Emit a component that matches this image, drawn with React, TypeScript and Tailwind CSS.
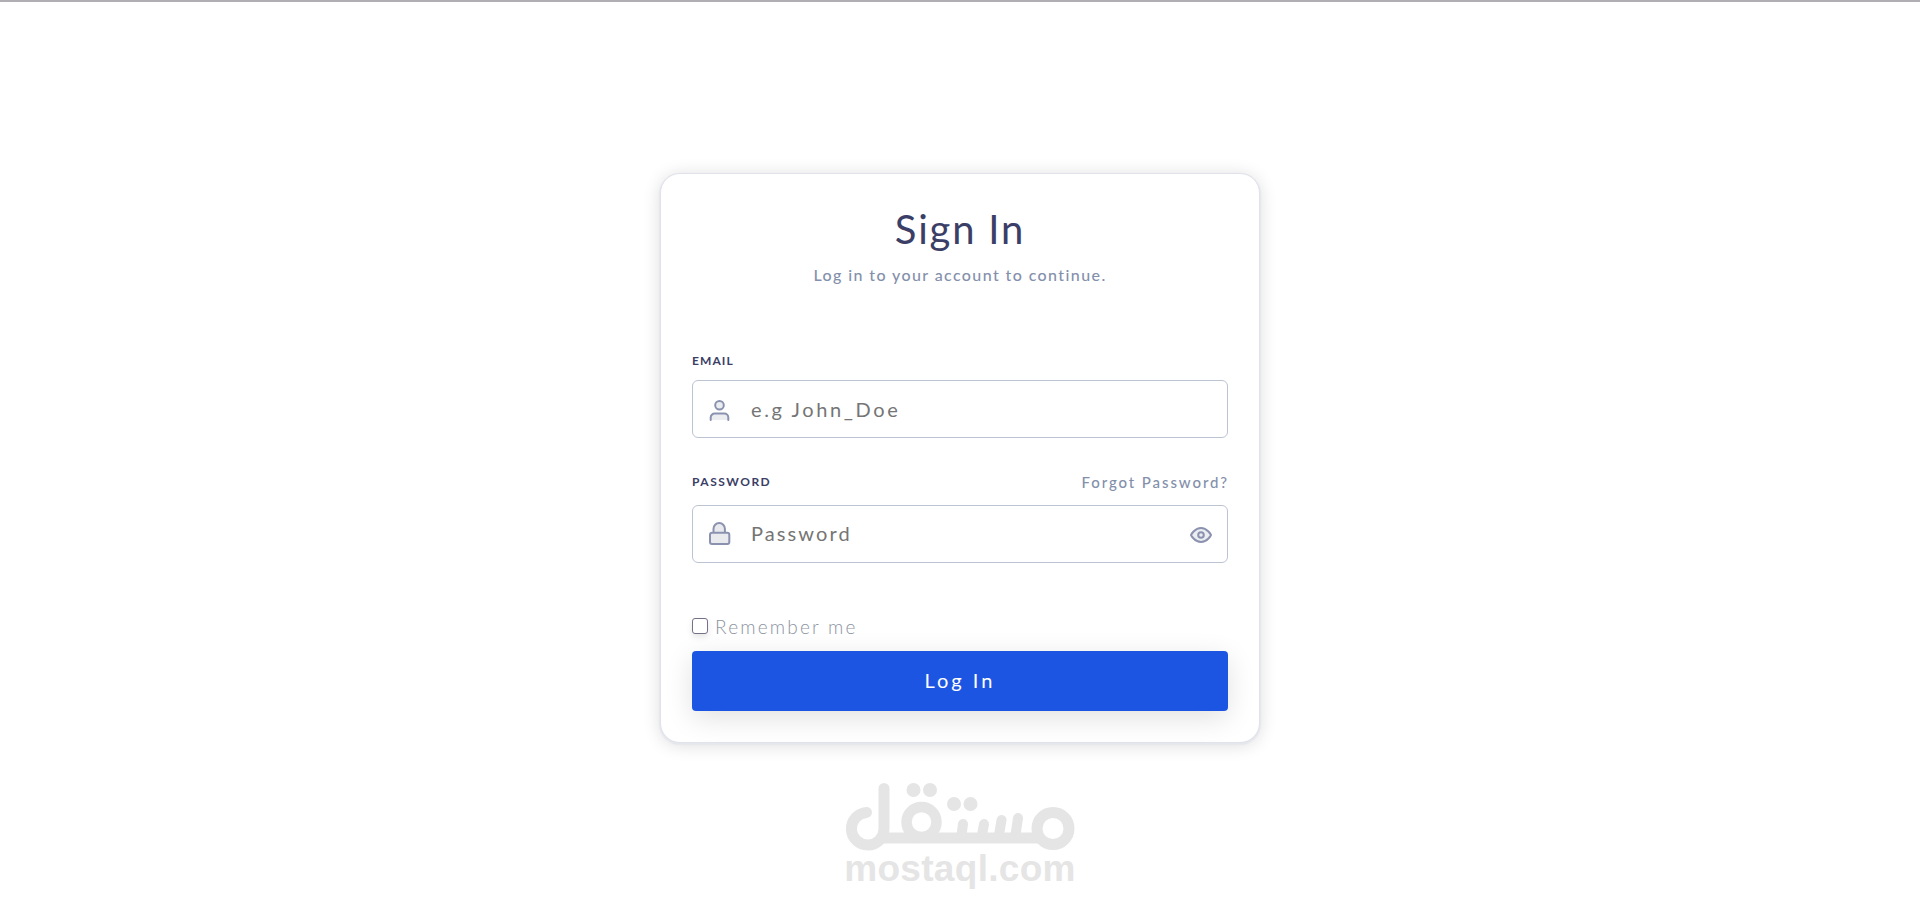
import { useState } from "react"

function UserIcon() {
  return (
    <svg width="24" height="24" viewBox="0 0 24 24" fill="#ecedf0" stroke="#8b92b0" strokeWidth="2" strokeLinecap="round" strokeLinejoin="round">
      <circle cx="12.5" cy="8.200" r="4.300" />
      <path d="M3.700 23v-2.500a4 4 0 0 1 4-4h9.600a4 4 0 0 1 4 4V23" />
    </svg>
  )
}

function LockIcon() {
  return (
    <svg width="24" height="24" viewBox="0 0 24 24" fill="#e9eaee" stroke="#8b92b0" strokeWidth="2" strokeLinecap="round" strokeLinejoin="round">
      <path d="M6.500 10.700V6.800a5.700 5.700 0 0 1 11.400 0v3.900" />
      <rect x="3" y="10.700" width="19.300" height="11.300" rx="2" />
    </svg>
  )
}

function EyeIcon() {
  return (
    <svg width="24" height="24" viewBox="0 0 24 24" fill="#ecedf0" stroke="#8b92b0" strokeWidth="2" strokeLinecap="round" strokeLinejoin="round">
      <path d="M2 13s3.500-7 10-7 10 7 10 7-3.500 7-10 7-10-7-10-7z" />
      <circle cx="12" cy="13" r="2.800" />
    </svg>
  )
}

function MostaqlLogo() {
  return (
    <div className="flex w-[230px] flex-col items-center text-[#e5e5e5]">
      <svg width="230" height="68" viewBox="0 0 230 68" fill="none" stroke="currentColor" strokeLinecap="round">
        <path d="M21.500 29.500A16.300 16.300 0 1 0 39 46V5.500" strokeWidth="11" />
        <path d="M34 55H198" strokeWidth="11" strokeLinecap="butt" />
        <circle cx="76.500" cy="39" r="15" strokeWidth="10.500" />
        <circle cx="208" cy="45.500" r="16" strokeWidth="11" />
        <path d="M116.500 52l1.500-11M137 52l2-11M154 52l2.500-15M170.500 52l2.500-17" strokeWidth="10" />
        <g fill="currentColor" stroke="none">
          <circle cx="68.500" cy="7" r="7" />
          <circle cx="85" cy="7" r="7" />
          <circle cx="109" cy="21" r="7" />
          <circle cx="125.500" cy="21" r="7" />
        </g>
      </svg>
      <span className="-mt-px font-['Liberation_Sans',sans-serif] text-[37px] leading-[38px] font-bold tracking-[0.3px]">mostaql.com</span>
    </div>
  )
}

export default function App() {
  const [email, setEmail] = useState("")
  const [password, setPassword] = useState("")
  const [visible, setVisible] = useState(false)
  const [remember, setRemember] = useState(false)

  return (
    <div className="flex h-screen flex-col items-center overflow-hidden border-t-2 border-[#b0aeb3] bg-white font-[Lato,sans-serif]">
      <form
        onSubmit={(e) => e.preventDefault()}
        className="mt-[171px] flex h-[570px] w-[600px] shrink-0 flex-col rounded-[20px] border border-[#e0e3ec] bg-white px-[31px] shadow-[0_1px_1px_1px_#e6e7ec,0_2px_18px_rgba(0,0,0,0.14)]"
      >
        {/* Heading */}
        <div className="flex flex-col items-center pt-[30px]">
          <h1 className="text-[40px] leading-[50px] tracking-[1.8px] text-[#3b3e66]">Sign In</h1>
          <p className="mt-[9px] text-[16px] leading-[24px] font-medium tracking-[1.4px] text-[#8490ab]">
            Log in to your account to continue.
          </p>
        </div>

        {/* Email */}
        <label htmlFor="email" className="mt-[65px] text-[12px] leading-[18px] font-bold tracking-[1.1px] text-[#3b3e66]">
          EMAIL
        </label>
        <div className="mt-[10px] flex h-[58px] items-center rounded-[6px] border border-[#bcc3d3] pl-[14px]">
          <UserIcon />
          <input
            id="email"
            value={email}
            onChange={(e) => setEmail(e.target.value)}
            placeholder="e.g John_Doe"
            className="ml-[20px] flex-1 text-[20px] tracking-[2.6px] outline-none placeholder:text-[#757575]"
          />
        </div>

        {/* Password */}
        <div className="mt-[32px] flex items-center justify-between">
          <label htmlFor="password" className="text-[12px] leading-[24px] font-bold tracking-[1.5px] text-[#3b3e66]">
            PASSWORD
          </label>
          <a href="#" className="-mr-px text-[15px] leading-[24px] font-medium tracking-[1.9px] text-[#8490ab]">Forgot Password?</a>
        </div>
        <div className="mt-[11px] flex h-[58px] items-center rounded-[6px] border border-[#bcc3d3] pr-[14px] pl-[14px]">
          <LockIcon />
          <input
            id="password"
            type={visible ? "text" : "password"}
            value={password}
            onChange={(e) => setPassword(e.target.value)}
            placeholder="Password"
            className="mb-[2px] ml-[20px] flex-1 text-[20px] tracking-[2.1px] outline-none placeholder:text-[#757575]"
          />
          <button type="button" onClick={() => setVisible(!visible)}>
            <EyeIcon />
          </button>
        </div>

        {/* Remember me */}
        <label className="mt-[50px] flex h-[28px] items-center text-[19px] font-light tracking-[2.2px] text-[#8d93a1]">
          <input
            type="checkbox"
            checked={remember}
            onChange={(e) => setRemember(e.target.checked)}
            className="mr-[7px] mb-[3px] size-[16px] appearance-none rounded-[3px] border border-[#767086] bg-white shadow-[0_3px_6px_rgba(0,0,0,0.1)] checked:bg-[#1d55e3]"
          />
          Remember me
        </label>
        <button
          type="submit"
          className="mt-[10px] h-[60px] shrink-0 rounded-[4px] bg-[#1d55e3] pb-[2px] text-[20px] tracking-[3px] text-white shadow-[0_7px_28px_rgba(0,0,0,0.12)]"
        >
          Log In
        </button>
      </form>

      <div className="mt-[40px]">
        <MostaqlLogo />
      </div>
    </div>
  )
}
